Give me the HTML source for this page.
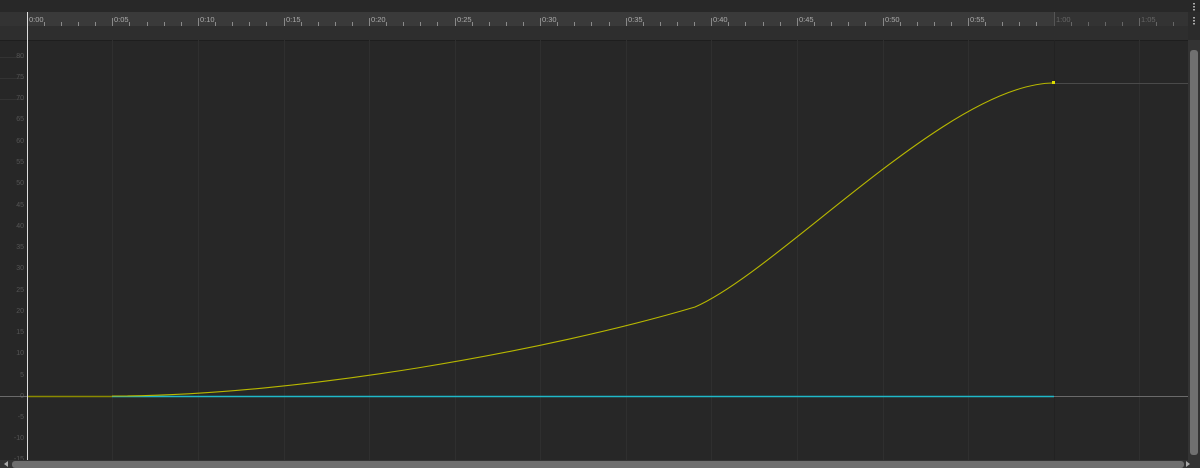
<!DOCTYPE html><html><head><style>body{margin:0;background:#282828;width:1200px;height:468px;overflow:hidden;font-family:"Liberation Sans",sans-serif}</style></head><body>
<svg width="1200" height="468" xmlns="http://www.w3.org/2000/svg" style="display:block">
<rect width="1200" height="468" fill="#282828"/>
<rect x="0" y="12" width="1188" height="14" fill="#3a3a3a"/>
<rect x="0" y="12" width="27" height="14" fill="#333"/>
<rect x="1054" y="12" width="134" height="14" fill="#333"/>
<rect x="0" y="26" width="1188" height="14" fill="#2e2e2e"/>
<rect x="0" y="40" width="1188" height="420" fill="#272727"/>
<rect x="0" y="40" width="1188" height="1" fill="#1e1e1e"/>
<g stroke="#2f2f2f" stroke-width="1">
<line x1="112.5" y1="40" x2="112.5" y2="460"/><line x1="198.5" y1="40" x2="198.5" y2="460"/><line x1="284.5" y1="40" x2="284.5" y2="460"/><line x1="369.5" y1="40" x2="369.5" y2="460"/><line x1="455.5" y1="40" x2="455.5" y2="460"/><line x1="540.5" y1="40" x2="540.5" y2="460"/><line x1="626.5" y1="40" x2="626.5" y2="460"/><line x1="711.5" y1="40" x2="711.5" y2="460"/><line x1="797.5" y1="40" x2="797.5" y2="460"/><line x1="883.5" y1="40" x2="883.5" y2="460"/><line x1="968.5" y1="40" x2="968.5" y2="460"/><line x1="1054.5" y1="40" x2="1054.5" y2="460" stroke="#222"/><line x1="1139.5" y1="40" x2="1139.5" y2="460"/>
</g>
<g stroke="#333" stroke-width="1">
<line x1="0" y1="57.5" x2="24" y2="57.5"/><line x1="0" y1="78.5" x2="24" y2="78.5"/><line x1="0" y1="99.5" x2="24" y2="99.5"/>
</g>
<g fill="#555" font-size="7" text-anchor="end">
<text x="24" y="58">80</text><text x="24" y="79">75</text><text x="24" y="100">70</text><text x="24" y="121">65</text><text x="24" y="143">60</text><text x="24" y="164">55</text><text x="24" y="185">50</text><text x="24" y="207">45</text><text x="24" y="228">40</text><text x="24" y="249">35</text><text x="24" y="270">30</text><text x="24" y="292">25</text><text x="24" y="313">20</text><text x="24" y="334">15</text><text x="24" y="355">10</text><text x="24" y="377">5</text><text x="24" y="398">0</text><text x="24" y="419">-5</text><text x="24" y="440">-10</text><text x="24" y="461">-15</text>
</g>
<g stroke="#8a8a8a" stroke-width="1" id="minor">
<path d="M44.5 22v4M61.5 22v4M78.5 22v4M95.5 22v4M129.5 22v4M147.5 22v4M164.5 22v4M181.5 22v4M215.5 22v4M232.5 22v4M249.5 22v4M266.5 22v4M301.5 22v4M318.5 22v4M335.5 22v4M352.5 22v4M386.5 22v4M403.5 22v4M420.5 22v4M437.5 22v4M472.5 22v4M489.5 22v4M506.5 22v4M523.5 22v4M557.5 22v4M574.5 22v4M591.5 22v4M609.5 22v4M643.5 22v4M660.5 22v4M677.5 22v4M694.5 22v4M728.5 22v4M745.5 22v4M763.5 22v4M780.5 22v4M814.5 22v4M831.5 22v4M848.5 22v4M865.5 22v4M900.5 22v4M917.5 22v4M934.5 22v4M951.5 22v4M985.5 22v4M1002.5 22v4M1019.5 22v4M1036.5 22v4"/>
<path stroke="#666" d="M1071.5 22v4M1088.5 22v4M1105.5 22v4M1122.5 22v4M1156.5 22v4M1173.5 22v4"/>
</g>
<g stroke="#888" stroke-width="1">
<line x1="112.5" y1="18" x2="112.5" y2="26"/><line x1="198.5" y1="18" x2="198.5" y2="26"/><line x1="284.5" y1="18" x2="284.5" y2="26"/><line x1="369.5" y1="18" x2="369.5" y2="26"/><line x1="455.5" y1="18" x2="455.5" y2="26"/><line x1="540.5" y1="18" x2="540.5" y2="26"/><line x1="626.5" y1="18" x2="626.5" y2="26"/><line x1="711.5" y1="18" x2="711.5" y2="26"/><line x1="797.5" y1="18" x2="797.5" y2="26"/><line x1="883.5" y1="18" x2="883.5" y2="26"/><line x1="968.5" y1="18" x2="968.5" y2="26"/><line x1="1054.5" y1="12" x2="1054.5" y2="26" stroke="#555"/><line x1="1139.5" y1="18" x2="1139.5" y2="26" stroke="#666"/>
</g>
<g fill="#aaa" font-size="7.5">
<text x="29" y="22">0:00</text><text x="114" y="22">0:05</text><text x="200" y="22">0:10</text><text x="286" y="22">0:15</text><text x="371" y="22">0:20</text><text x="457" y="22">0:25</text><text x="542" y="22">0:30</text><text x="628" y="22">0:35</text><text x="713" y="22">0:40</text><text x="799" y="22">0:45</text><text x="885" y="22">0:50</text><text x="970" y="22">0:55</text><text x="1056" y="22" fill="#666">1:00</text><text x="1141" y="22" fill="#666">1:05</text>
</g>
<line x1="0" y1="396.5" x2="1188" y2="396.5" stroke="#6a6a6a"/>
<line x1="1054" y1="83.5" x2="1188" y2="83.5" stroke="#4a4a4a"/>
<line x1="112" y1="396.5" x2="1054" y2="396.5" stroke="#1fb8c8" stroke-width="1.5"/>
<line x1="27" y1="396.5" x2="112" y2="396.5" stroke="#8a8a00" stroke-width="1.5"/>
<path d="M112 396 C300 396 550 350 695 307 C780 270 950 83 1054 83" fill="none" stroke="#b8b800" stroke-width="1.1"/>
<rect x="1052" y="81" width="3" height="3" fill="#dd0"/>
<line x1="27.5" y1="12" x2="27.5" y2="468" stroke="#ddd" stroke-width="1"/>
<rect x="1188" y="40" width="12" height="420" fill="#333"/>
<rect x="1190" y="50" width="8" height="405" rx="3" fill="#707070"/>
<rect x="1188" y="12" width="12" height="28" fill="#2b2b2b"/>
<rect x="1193" y="3" width="2" height="1.5" fill="#aaa"/><rect x="1193" y="6" width="2" height="1.5" fill="#aaa"/><rect x="1193" y="9" width="2" height="1.5" fill="#aaa"/>
<rect x="1193" y="17" width="2" height="1.5" fill="#aaa"/><rect x="1193" y="20" width="2" height="1.5" fill="#aaa"/><rect x="1193" y="23" width="2" height="1.5" fill="#aaa"/>
<rect x="0" y="460" width="1200" height="8" fill="#333"/>
<rect x="12" y="461" width="1172" height="7" rx="3" fill="#6e6e6e"/>
<polygon points="4,464 8,461 8,467" fill="#aaa"/><polygon points="1190,464 1186,461 1186,467" fill="#aaa"/>
</svg></body></html>
